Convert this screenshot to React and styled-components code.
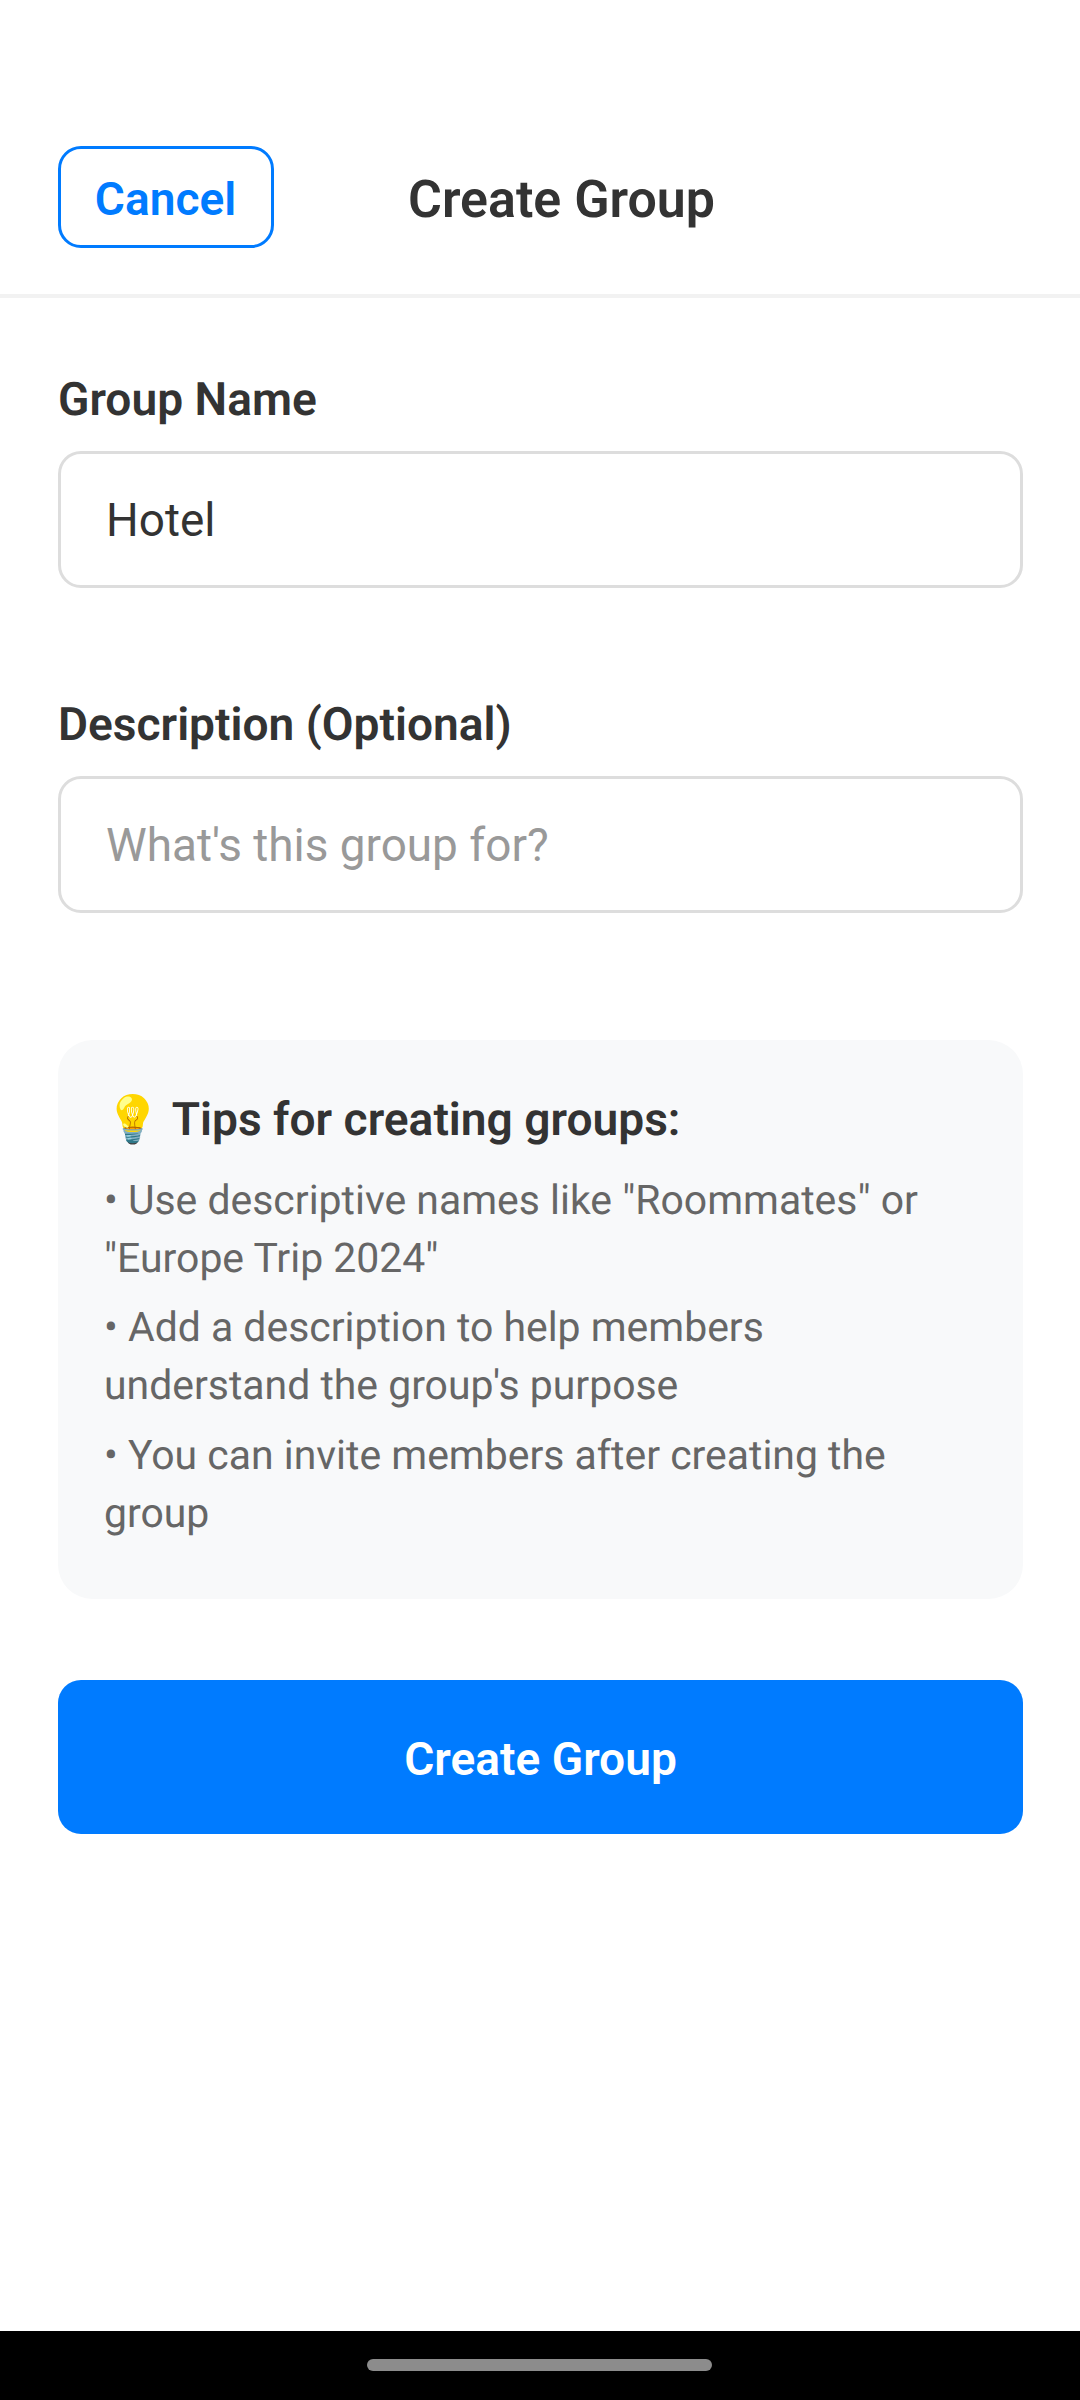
import React, { useState } from "react";
import styled, { createGlobalStyle } from "styled-components";

const GlobalStyle = createGlobalStyle`
  *, *::before, *::after { box-sizing: border-box; }
  body {
    margin: 0;
    background: #ffffff;
    font-family: Roboto, "Noto Sans", sans-serif;
    text-rendering: geometricPrecision;
  }
`;

const Screen = styled.div`
  display: flex;
  flex-direction: column;
  width: 1080px;
  height: 2400px;
  background: #ffffff;
  color: #333333;
`;

const Header = styled.header`
  display: flex;
  align-items: center;
  justify-content: space-between;
  height: 298px;
  padding: 100px 58px 0;
  border-bottom: 4px solid #f2f2f2;
`;

const CancelButton = styled.button`
  width: 216px;
  height: 102px;
  padding: 4px 1px 0 0;
  border: 3px solid #007bff;
  border-radius: 23px;
  background: transparent;
  color: #007bff;
  font: 600 46.1px/54px Roboto, sans-serif;
`;

const Title = styled.h1`
  margin: 0;
  padding-top: 5px;
  font-size: 51.9px;
  font-weight: 600;
  line-height: 62px;
`;

const HeaderSpacer = styled.div`
  width: 173px;
`;

const Form = styled.main`
  display: flex;
  flex-direction: column;
  flex: 1;
  padding: 74px 57px 0 58px;
`;

const Field = styled.div`
  display: flex;
  flex-direction: column;
  gap: 22px;
  margin-bottom: 109px;
`;

const Label = styled.label`
  height: 57px;
  font-size: 46.1px;
  font-weight: 600;
  line-height: 57px;
`;

const Input = styled.input`
  width: 100%;
  height: 137px;
  padding: 0 43px 0 45px;
  border: 3px solid #dddddd;
  border-radius: 23px;
  outline: none;
  background: #ffffff;
  color: #333333;
  font: 400 45.9px/54px Roboto, sans-serif;

  &::placeholder { color: #999999; opacity: 1; }
`;

const Tips = styled.section`
  height: 559px;
  margin-top: 18px;
  padding: 49px 46px 46px;
  border-radius: 34.5px;
  background: #f8f9fa;
`;

const TipsTitle = styled.h2`
  margin: 0 0 19.7px;
  height: 62px;
  font-family: Roboto, "Noto Color Emoji", sans-serif;
  font-size: 46.1px;
  font-weight: 600;
  line-height: 62px;
`;

const Tip = styled.p`
  margin: 0 0 11.5px;
  color: #666666;
  font-size: 40.93px;
  line-height: 58px;
`;

const SubmitButton = styled.button`
  height: 154px;
  margin-top: 81px;
  padding: 4px 0 0;
  border: 0;
  border-radius: 23px;
  background: #007bff;
  color: #ffffff;
  font: 600 46.1px/54px Roboto, sans-serif;
`;

const NavigationBar = styled.footer`
  display: flex;
  justify-content: center;
  height: 69px;
  padding: 28px 1px 0 0;
  background: #000000;
`;

const HomeIndicator = styled.div`
  width: 345px;
  height: 12px;
  border-radius: 6px;
  background: #8c8c8c;
`;

const tips = [
  '• Use descriptive names like "Roommates" or "Europe Trip 2024"',
  "• Add a description to help members understand the group's purpose",
  "• You can invite members after creating the group",
];

export default function App() {
  const [name, setName] = useState("Hotel");
  const [description, setDescription] = useState("");

  return (
    <>
      <GlobalStyle />
      <Screen>
        <Header>
          <CancelButton type="button">Cancel</CancelButton>
          <Title>Create Group</Title>
          <HeaderSpacer />
        </Header>
        <Form>
          <Field>
            <Label htmlFor="name">Group Name</Label>
            <Input id="name" value={name} onChange={(e) => setName(e.target.value)} />
          </Field>
          <Field>
            <Label htmlFor="description">Description (Optional)</Label>
            <Input
              id="description"
              placeholder="What's this group for?"
              value={description}
              onChange={(e) => setDescription(e.target.value)}
            />
          </Field>
          <Tips>
            <TipsTitle>💡 Tips for creating groups:</TipsTitle>
            {tips.map((tip) => (
              <Tip key={tip}>{tip}</Tip>
            ))}
          </Tips>
          <SubmitButton type="button">Create Group</SubmitButton>
        </Form>
        <NavigationBar>
          <HomeIndicator />
        </NavigationBar>
      </Screen>
    </>
  );
}
